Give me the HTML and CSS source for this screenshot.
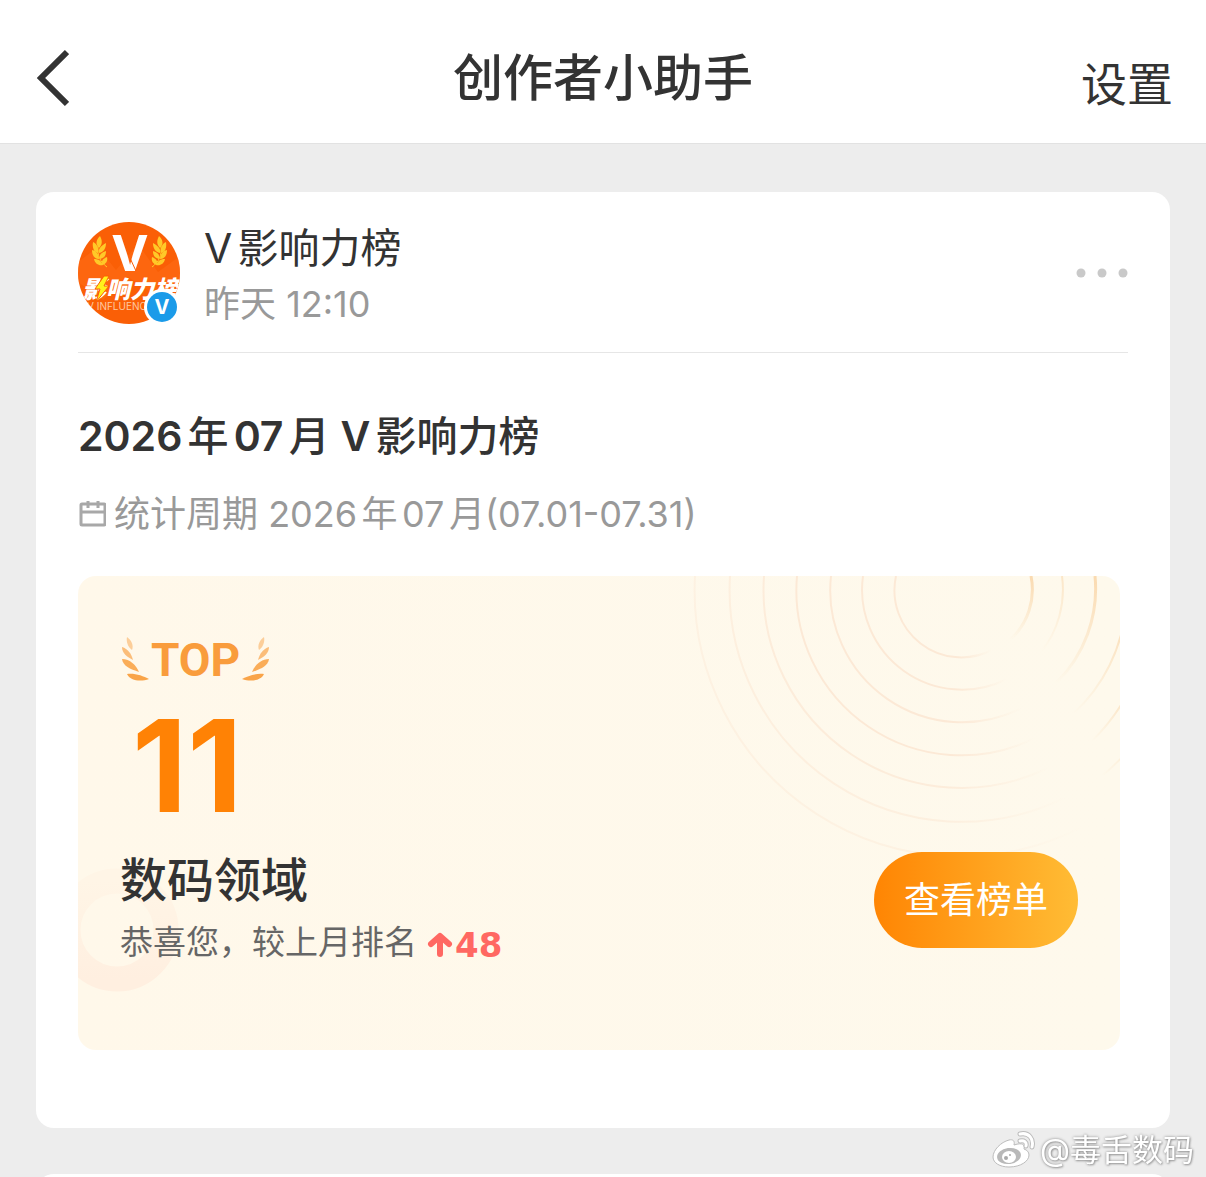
FILE: index.html
```html
<!DOCTYPE html>
<html lang="zh-CN">
<head>
    <meta charset="UTF-8">
    <meta name="viewport" content="width=device-width, initial-scale=1.0">
    <title>创作者小助手</title>
    <link rel="stylesheet" href="styles.css">
</head>
<body>
    <header class="navbar">
        <button class="back" type="button" aria-label="返回">
            <svg width="36" height="60" viewBox="0 0 36 60" fill="none" stroke="#333" stroke-width="6">
                <path d="M34 4L8 30L34 56"/>
            </svg>
        </button>
        <h1>创作者小助手</h1>
        <a class="settings" href="#settings">设置</a>
    </header>

    <main class="feed">
        <article class="card">
            <div class="card-head">
                <svg class="avatar" width="102" height="102" viewBox="0 0 102 102">
                    <defs>
                        <clipPath id="round"><circle cx="51" cy="51" r="51"/></clipPath>
                        <g id="wheat" fill="#ffc928">
                            <path d="M22 14C17 19 18 23 21 26C25 22 24 18 22 14Z"/>
                            <path d="M15 20C14 26 16 30 20 31C21 26 19 22 15 20Z"/>
                            <path d="M28 21C22 24 20 28 21 31C26 30 28 26 28 21Z"/>
                            <path d="M14 28C14 34 17 37 21 37C21 33 19 29 14 28Z"/>
                            <path d="M28 29C22 31 21 34 22 37C26 36 28 34 28 29Z"/>
                            <path d="M16 37C17 42 21 44 25 43C23 39 21 37 16 37Z"/>
                            <path d="M29 35C24 37 23 40 24 43C28 42 30 39 29 35Z"/>
                            <path d="M20 24C19 33 22 40 29 45" fill="none" stroke="#ffc928"/>
                        </g>
                    </defs>
                    <g clip-path="url(#round)">
                        <rect width="102" height="102" fill="#fa5f06"/>
                        <path d="M0 40L20 25L38 48L60 22L80 50L102 34V60L80 75L50 55L25 78L0 60Z" fill="#ff6d18" opacity=".5"/>
                        <use href="#wheat"/>
                        <use href="#wheat" transform="translate(103 0) scale(-1 1)"/>
                        <text class="logo-v" x="52" y="49">V</text>
                        <path d="M52 36L58 49" stroke="#fa5f06" stroke-width="1"/>
                        <text class="logo-name" x="52" y="76">影响力榜</text>
                        <path d="M26 54L17 67H22L18 80L31 64H26L31 54Z" fill="#fff21c" stroke="#fa5f06" stroke-width="1"/>
                        <text class="logo-sub" x="9" y="88">V INFLUENCE</text>
                    </g>
                    <circle cx="84" cy="85" r="18" fill="#fff"/>
                    <circle cx="84" cy="85" r="15" fill="#1b9be9"/>
                    <text class="badge-v" x="84" y="92">V</text>
                </svg>
                <div class="author">
                    <h2>V影响力榜</h2>
                    <time>昨天 12:10</time>
                </div>
                <button class="more" type="button" aria-label="更多">
                    <svg width="52" height="10" viewBox="0 0 52 10" fill="#c9c9c9">
                        <circle cx="5" cy="5" r="4.5"/>
                        <circle cx="26" cy="5" r="4.5"/>
                        <circle cx="47" cy="5" r="4.5"/>
                    </svg>
                </button>
            </div>

            <h3 class="title"><b>2026</b>年<b>07</b>月 <b>V</b>影响力榜</h3>
            <p class="period">
                <svg width="28" height="28" viewBox="0 0 28 28" fill="none" stroke="#a8a8a8" stroke-width="3">
                    <rect x="3" y="4" width="24" height="21" rx="1"/>
                    <path d="M3 12H27M10 1V8M20 1V8"/>
                </svg>
                <span>统计周期 2026年07月(07.01-07.31)</span>
            </p>

            <section class="rank">
                <svg class="arcs" width="440" height="290" viewBox="0 0 440 290" fill="none" stroke-width="2">
                    <defs>
                        <linearGradient id="fade">
                            <stop offset="0" stop-color="#fce9d6"/>
                            <stop offset=".65" stop-color="#fce9d6"/>
                            <stop offset="1" stop-color="#fce9d6" stop-opacity="0"/>
                        </linearGradient>
                        <linearGradient id="glow" x1="0" y1="1" x2="0" y2="0">
                            <stop offset="0" stop-color="#f9d8ae" stop-opacity="0"/>
                            <stop offset="1" stop-color="#fadab0"/>
                        </linearGradient>
                    </defs>
                    <g stroke="url(#fade)">
                        <path d="M216 0A67 67 0 0 0 312 74"/>
                        <path d="M183 0A100 100 0 0 0 327 103"/>
                        <path d="M151 0A132 132 0 0 0 342 132"/>
                        <path d="M117 0A165 165 0 0 0 355 162"/>
                        <path d="M84 0A198 198 0 0 0 370 191" opacity=".8"/>
                        <path d="M50 0A232 232 0 0 0 386 221" opacity=".6"/>
                        <path d="M15 0A266 266 0 0 0 404 250" opacity=".45"/>
                    </g>
                    <g stroke="url(#glow)">
                        <path d="M330 64A68 68 0 0 0 351 0" stroke-width="3"/>
                        <path d="M361 76A100 100 0 0 0 382 0" opacity=".6"/>
                        <path d="M376 107A132 132 0 0 0 415 0" stroke-width="3"/>
                        <path d="M393 138A165 165 0 0 0 446 30"/>
                        <path d="M412 165A198 198 0 0 0 456 100"/>
                        <path d="M422 200A232 232 0 0 0 456 165" opacity=".5"/>
                    </g>
                </svg>
                <svg class="ring" width="110" height="130" viewBox="0 0 110 130" fill="none">
                    <defs>
                        <linearGradient id="peach" x1="0" y1="0" x2="0" y2="1">
                            <stop offset="0" stop-color="#fff5e6"/>
                            <stop offset="1" stop-color="#ffefe0"/>
                        </linearGradient>
                    </defs>
                    <circle cx="39" cy="64" r="49" stroke="url(#peach)" stroke-width="25"/>
                </svg>

                <div class="rank-info">
                    <div class="top">
                        <svg width="30" height="46" viewBox="0 0 30 46" fill="#f9a448">
                            <path d="M7 0C11 3 14 8 12 13C8 10 6 5 7 0Z" opacity=".5"/>
                            <path d="M2 10C8 12 11 16 13 23C7 20 2 16 2 10Z" opacity=".7"/>
                            <path d="M2 22C10 22 16 28 19 35C10 32 3 29 2 22Z" opacity=".9"/>
                            <path d="M7 37C15 36 23 39 29 42C21 45 10 44 7 37Z"/>
                        </svg>
                        <span>TOP</span>
                        <svg class="flip" width="30" height="46" viewBox="0 0 30 46" fill="#f9a448">
                            <path d="M7 0C11 3 14 8 12 13C8 10 6 5 7 0Z" opacity=".5"/>
                            <path d="M2 10C8 12 11 16 13 23C7 20 2 16 2 10Z" opacity=".7"/>
                            <path d="M2 22C10 22 16 28 19 35C10 32 3 29 2 22Z" opacity=".9"/>
                            <path d="M7 37C15 36 23 39 29 42C21 45 10 44 7 37Z"/>
                        </svg>
                    </div>
                    <strong class="number">11</strong>
                    <h4>数码领域</h4>
                    <p class="change">
                        恭喜您，较上月排名
                        <svg width="26" height="28" viewBox="0 0 26 28" fill="none" stroke="#ff6862" stroke-width="6" stroke-linecap="round" stroke-linejoin="round">
                            <path d="M13 7V24M4 14L13 6L22 14"/>
                        </svg>
                        <b>48</b>
                    </p>
                </div>
                <button class="view" type="button">查看榜单</button>
            </section>
        </article>
        <article class="card next"></article>
    </main>

    <div class="watermark">
        <svg width="44" height="38" viewBox="0 0 44 38">
            <path d="M17 9C9 11 1 19 1 26C1 32 8 36 17 36C29 36 37 30 37 24C37 21 35 19 32 18C33 14 31 11 22 14C23 10 21 8 17 9Z" fill="#fff" stroke="#bbb" stroke-width="1"/>
            <ellipse cx="17" cy="25" rx="12" ry="8" fill="#b9b9b9" transform="rotate(-8 17 25)"/>
            <ellipse cx="17" cy="26" rx="7" ry="6" fill="#fff"/>
            <circle cx="14" cy="27" r="2" fill="#aaa"/>
            <circle cx="18" cy="24" r="1" fill="#aaa"/>
            <path d="M28 3C37 1 42 8 40 16M28 10C32 9 35 11 34 15" fill="none" stroke="#bbb" stroke-width="5" stroke-linecap="round"/>
            <path d="M28 3C37 1 42 8 40 16M28 10C32 9 35 11 34 15" fill="none" stroke="#fff" stroke-width="3" stroke-linecap="round"/>
        </svg>
        <span>@毒舌数码</span>
    </div>
</body>
</html>
```
FILE: styles.css
```css
* {
    box-sizing: border-box;
    margin: 0;
    padding: 0;
}
body {
    font-family: Inter, "Noto Sans CJK SC", sans-serif;
    text-autospace: normal;
    display: flex;
    flex-direction: column;
    height: 100vh;
    overflow: hidden;
    background-color: #ededed;
    color: #333;
}
button {
    border: none;
    background: none;
    font-family: inherit;
    cursor: pointer;
}
svg {
    display: block;
    flex-shrink: 0;
}

/* top bar */
.navbar {
    display: grid;
    grid-template-columns: 1fr auto 1fr;
    align-items: center;
    height: 144px;
    padding: 12px 33px 0;
    background: #fff;
    border-bottom: 1px solid #e2e2e2;
    flex-shrink: 0;
}
.back {
    justify-self: start;
}
.navbar h1 {
    font-size: 50px;
    font-weight: 500;
    line-height: 60px;
}
.settings {
    justify-self: end;
    padding-top: 12px;
    font-size: 46px;
    line-height: 60px;
    color: #333;
    text-decoration: none;
}

/* cards */
.feed {
    display: flex;
    flex-direction: column;
    gap: 46px;
    padding: 48px 36px 0;
    flex: 1;
    min-height: 0;
    overflow: hidden;
}
.card {
    padding: 30px 42px 78px;
    background: #fff;
    border-radius: 18px;
    flex-shrink: 0;
}
.card-head {
    display: flex;
    gap: 24px;
    padding-bottom: 22px;
    border-bottom: 1px solid #e6e6e6;
}
.author {
    display: flex;
    flex-direction: column;
    gap: 4px;
    flex: 1;
    line-height: 52px;
}
.author h2 {
    font-size: 41px;
    font-weight: 400;
}
.author time {
    font-size: 36px;
    color: #999;
}
.more {
    height: 102px;
}
.logo-v,
.logo-name,
.badge-v {
    font-weight: 700;
    fill: #fff;
    text-anchor: middle;
}
.logo-v {
    font-size: 50px;
}
.logo-name {
    font-size: 24px;
    font-weight: 900;
    font-style: italic;
}
.logo-sub {
    font-size: 10px;
    fill: #ffc9a0;
}
.badge-v {
    font-size: 20px;
}
.title {
    margin-top: 53px;
    font-size: 41px;
    font-weight: 500;
    line-height: 60px;
}
.title b {
    font-weight: 600;
}
.period {
    display: flex;
    align-items: center;
    gap: 8px;
    margin-top: 23px;
    font-size: 36px;
    line-height: 50px;
    color: #999;
}

/* rank panel */
.rank {
    position: relative;
    display: flex;
    justify-content: space-between;
    align-items: flex-end;
    margin: 37px 8px 0 0;
    padding: 60px 42px 84px;
    background: linear-gradient(90deg, #fff8ea, #fef9ec);
    border-radius: 18px;
    overflow: hidden;
}
.arcs {
    position: absolute;
    top: 0;
    right: 0;
}
.ring {
    position: absolute;
    left: 0;
    bottom: 54px;
}
.rank-info {
    position: relative;
}
.top {
    display: flex;
    align-items: center;
    gap: 1px;
    font-family: Roboto, sans-serif;
    font-size: 46px;
    font-weight: 700;
    line-height: 48px;
    color: #f99c3c;
}
.flip {
    transform: scaleX(-1);
}
.number {
    display: block;
    margin-top: 18px;
    padding-left: 12px;
    font-size: 128px;
    font-weight: 700;
    line-height: 128px;
    color: #ff8205;
}
.rank h4 {
    margin-top: 22px;
    font-size: 47px;
    font-weight: 500;
    line-height: 56px;
}
.change {
    display: flex;
    align-items: center;
    margin-top: 10px;
    font-size: 33px;
    line-height: 48px;
    color: #666;
}
.change svg {
    margin: 4px 2px 0 10px;
}
.change b {
    padding-top: 6px;
    font-family: "DejaVu Sans", sans-serif;
    font-size: 34px;
    line-height: 42px;
    color: #ff6862;
}
.view {
    position: relative;
    margin-bottom: 18px;
    padding: 0 30px;
    border-radius: 48px;
    background: linear-gradient(90deg, #ff8503, #ffbc35);
    font-size: 36px;
    line-height: 96px;
    color: #fff;
}

.watermark {
    position: fixed;
    right: 12px;
    bottom: 4px;
    display: flex;
    align-items: center;
    gap: 4px;
    font-size: 31px;
    line-height: 46px;
    text-autospace: no-autospace;
    color: #fff;
    text-shadow: 0 0 3px #888, 1px 1px 2px #aaa;
}
```
